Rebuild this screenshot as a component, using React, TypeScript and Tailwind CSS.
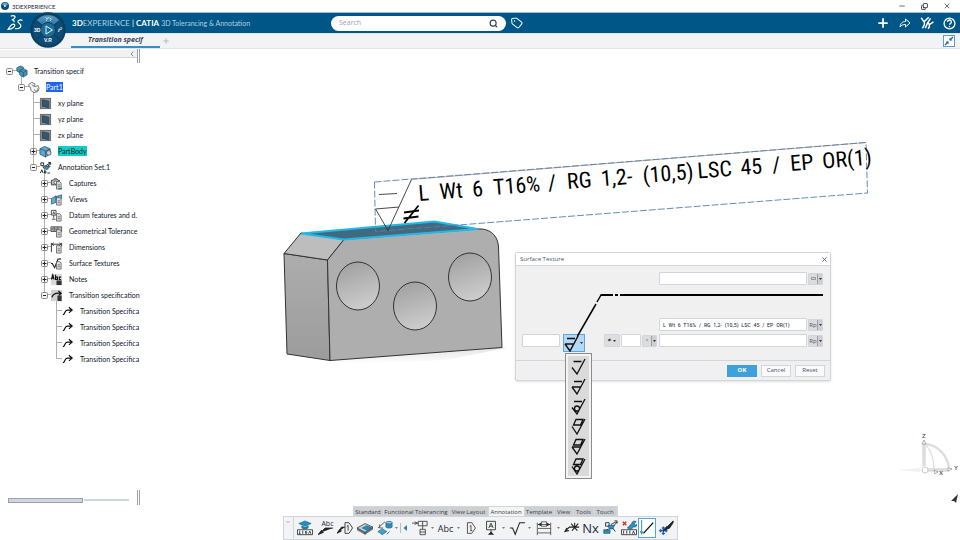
import React, { useState } from 'react';
import { Search, Tag, Plus, X, Minus, Copy, ChevronLeft, ChevronDown } from 'lucide-react';

type IconName =
  | 'product' | 'part' | 'plane' | 'body' | 'set' | 'captures' | 'views' | 'datum'
  | 'gtol' | 'dims' | 'texture' | 'notes' | 'transition' | 'arrow';

interface TreeItem {
  label: string;
  level: number;
  icon: IconName;
  state?: 'open' | 'closed';
  mark?: string;
}

const TREE: TreeItem[] = [
  { label: 'Transition specif', level: 0, icon: 'product', state: 'open' },
  { label: 'Part1', level: 1, icon: 'part', state: 'open', mark: 'bg-[#1b66f0] text-white' },
  { label: 'xy plane', level: 2, icon: 'plane' },
  { label: 'yz plane', level: 2, icon: 'plane' },
  { label: 'zx plane', level: 2, icon: 'plane' },
  { label: 'PartBody', level: 2, icon: 'body', state: 'closed', mark: 'bg-[#0fcfc4]' },
  { label: 'Annotation Set.1', level: 2, icon: 'set', state: 'open' },
  { label: 'Captures', level: 3, icon: 'captures', state: 'closed' },
  { label: 'Views', level: 3, icon: 'views', state: 'closed' },
  { label: 'Datum features and d.', level: 3, icon: 'datum', state: 'closed' },
  { label: 'Geometrical Tolerance', level: 3, icon: 'gtol', state: 'closed' },
  { label: 'Dimensions', level: 3, icon: 'dims', state: 'closed' },
  { label: 'Surface Textures', level: 3, icon: 'texture', state: 'closed' },
  { label: 'Notes', level: 3, icon: 'notes', state: 'closed' },
  { label: 'Transition specification', level: 3, icon: 'transition', state: 'open' },
  { label: 'Transition Specifica', level: 4, icon: 'arrow' },
  { label: 'Transition Specifica', level: 4, icon: 'arrow' },
  { label: 'Transition Specifica', level: 4, icon: 'arrow' },
  { label: 'Transition Specifica', level: 4, icon: 'arrow' },
];

const INDENT = ['pl-[3px]', 'pl-[15px]', 'pl-[27px]', 'pl-[38px]', 'pl-[49px]'];

const Page = () => (
  <g stroke="#555" strokeWidth="0.8" fill="#ddd">
    <path d="M7 5h3.5l1.5 1.5V13H7z" />
    <path d="M8.3 8.5h2.5M8.3 10.5h2.5" />
  </g>
);

const TreeIcon = ({ name }: { name: IconName }) => {
  const shapes: Record<IconName, React.ReactNode> = {
    product: (
      <g fill="#4b94b8" stroke="#1f5672" strokeWidth="0.8">
        <path d="M2 3l4-2 3 1.500v4L5.500 8.500 2 6.500z" />
        <path d="M5 6l4-2L13 6v4.500L9 13 5 10.500z" />
        <path d="M5 6l4 2L13 6M9 8v5" fill="none" />
      </g>
    ),
    part: (
      <g fill="#f3f3f3" stroke="#666" strokeWidth="0.9">
        <path d="M2 3.500l3-2 3.500 1.500L8 6l4-1 1 3-1.500 3.500-4 1L4 10V7L2 6z" />
        <path d="M5 4l3 2M8 9a2 1.500 0 1 0 3-1" fill="none" />
      </g>
    ),
    plane: (
      <g>
        <rect x="1.500" y="1.500" width="11" height="11" fill="#8a9499" stroke="#666" />
        <path d="M3.500 3l7 1.500v7L3.500 10z" fill="#315871" stroke="#26323a" strokeWidth="0.7" />
      </g>
    ),
    body: (
      <g strokeWidth="0.8">
        <path d="M1 4l5-2.500L12 4v5.500L7 13 1 10z" fill="#5fa6c8" stroke="#1f5672" />
        <path d="M1 4l6 2.500L12 4M7 6.500V13" fill="none" stroke="#1f5672" />
        <circle cx="10.500" cy="8.500" r="2.500" fill="#c9d3d8" stroke="#444" />
      </g>
    ),
    set: (
      <g fill="none" stroke="#222" strokeWidth="1">
        <path d="M2 2h3v3H2zM6 6l6-4M9 7l3-5M4 6l3 4M10 1.500h2.500V4" />
        <path d="M5 5.500h7l-3.500 4z" fill="#2d8fb8" stroke="#1f5672" />
        <path d="M1.500 13L3 9.500 4.500 13M6 10v3h1.500v-2H6M9 13h3" />
      </g>
    ),
    captures: (
      <g>
        <path d="M1.500 3.500h2l1-1.500h3l1 1.500H10v5H1.500z" fill="#bbb" stroke="#333" strokeWidth="0.9" />
        <circle cx="6" cy="6" r="1.600" fill="#fff" stroke="#333" strokeWidth="0.8" />
        <Page />
        <path d="M9 12.500h4" stroke="#287da5" strokeWidth="1.500" />
      </g>
    ),
    views: (
      <g>
        <path d="M1.500 6l5-3v7l-5 2zM6.500 4l6-2v4L6.500 7z" fill="#62aed0" stroke="#28566c" strokeWidth="0.8" />
        <Page />
      </g>
    ),
    datum: (
      <g fill="none" stroke="#333" strokeWidth="0.9">
        <path d="M1.500 1.500h5v5h-5zM3 5.500L4 3l1 2.500M4 6.500V10M2 11h4" />
        <Page />
      </g>
    ),
    gtol: (
      <g fill="#bbb" stroke="#444" strokeWidth="0.9">
        <path d="M1 2h11.500v5H1zM4.500 2v5M8.500 2v5M2 5.500l1.500-2M5.500 4.500H7.500" />
        <Page />
      </g>
    ),
    dims: (
      <g fill="none" stroke="#333" strokeWidth="1">
        <path d="M1.500 2v10M12.500 2v4M2 3.500h10M4 2L2 3.500 4 5M10 2l2 1.500L10 5" />
        <Page />
      </g>
    ),
    texture: (
      <g fill="none" stroke="#222" strokeWidth="1.200">
        <path d="M1 7h1.500L5 11.500 8.500 2.500 12 2" />
        <Page />
      </g>
    ),
    notes: (
      <g>
        <path d="M1 1h12v12H1z" fill="#dadada" />
        <path d="M1.500 7L3 2l1.500 5M2 5.500h2M6 2v5h2V4.500H6M12 4.500h-2V7h2" fill="none" stroke="#111" strokeWidth="1.200" />
        <path d="M7 8h5.500v5H7z" fill="#333" />
      </g>
    ),
    transition: (
      <g>
        <path d="M1 1h12v12H1z" fill="#d0d0d0" />
        <path d="M2 9c1-4 4-5 9-4.500M9 2l3 2.500L9.500 7" fill="none" stroke="#111" strokeWidth="1.300" />
        <path d="M8 7h4.500v6H8z" fill="#333" />
      </g>
    ),
    arrow: (
      <path
        d="M2 10.500C4.500 10.500 3.500 5.500 7 5.500h5M8.500 2.500l3.500 3-3.500 3"
        fill="none"
        stroke="#111"
        strokeWidth="1.300"
      />
    ),
  };
  return (
    <svg viewBox="0 0 14 14" className="h-[13px] w-[13px] shrink-0" aria-hidden="true">
      {shapes[name]}
    </svg>
  );
};

const TitleBar = () => (
  <div className="flex h-3 items-center bg-white pl-px font-['Lato',sans-serif] text-[6px] text-gray-800">
    <svg viewBox="0 0 16 16" className="mr-[3px] h-2 w-2" aria-hidden="true">
      <circle cx="8" cy="8" r="8" fill="#0d4f79" />
      <path d="M2 5a6.500 6.500 0 0 1 12 0L8 8z" fill="#5aa7cf" />
      <path d="M6.500 5.500L11 8l-4.500 2.500z" fill="#fff" />
    </svg>
    <span>3DEXPERIENCE</span>
    <div className="ml-auto flex items-center gap-[15px] pr-[9px]">
      <button aria-label="Minimize"><Minus className="h-2 w-2" /></button>
      <button aria-label="Restore"><Copy className="h-[7px] w-[7px] -scale-y-100" strokeWidth={3} /></button>
      <button aria-label="Close window"><X className="h-2 w-2" /></button>
    </div>
  </div>
);

const Compass = () => (
  <button aria-label="Compass" className="absolute top-3 left-[30px] z-10 h-9 w-9">
    <svg viewBox="0 0 36 36" className="h-full w-full">
      <defs>
        <linearGradient id="sector" x1="0" y1="0" x2="0" y2="1">
          <stop offset="0" stopColor="#5d9cc0" />
          <stop offset="1" stopColor="#2a75a0" />
        </linearGradient>
      </defs>
      <circle cx="18" cy="18" r="17.800" fill="#0b3f61" />
      <circle cx="18" cy="18" r="15.500" fill="#0d4c74" />
      <path d="M6.500 8.500a15 15 0 0 1 23 0L23.500 13.500a7.500 7.500 0 0 0-11 0z" fill="url(#sector)" />
      <path d="M6.500 27.500L12 22.500a7.500 7.500 0 0 0 12 0L29.500 27.500M6.500 8.500L12.500 13.500M29.500 8.500L23.500 13.500" fill="none" stroke="#093a5a" />
      <circle cx="18" cy="18" r="7.500" fill="#1d6c98" stroke="#0a4168" />
      <path d="M16 14l6.500 4-6.500 4z" fill="none" stroke="#fff" strokeWidth="0.900" />
      <path d="M15.500 5.500l2 1.500 1-2M19.500 6l2 1M16 9l1-1.500M20 9l1-1.500" stroke="#d8ebf5" strokeWidth="0.900" fill="none" />
      <g fill="#fff" fontFamily="Liberation Sans, sans-serif" fontWeight="700">
        <text x="4" y="20" fontSize="5">3D</text>
        <text x="14" y="30" fontSize="5">V.R</text>
        <text x="28" y="20" fontSize="6" fontStyle="italic">i²</text>
      </g>
    </svg>
  </button>
);

const Header = () => (
  <header className="flex h-[21px] items-center border-t border-[#9fc0d4] bg-[#005686] text-white">
    <div className="flex w-[331px] items-center">
      <svg viewBox="0 0 30 30" className="ml-[7px] h-4 w-4" fill="none" stroke="#fff" strokeWidth="2.200" aria-label="3DS" role="img">
        <path d="M7 2c5-1.500 9-.5 8 2.500-.8 2.500-4 4-6 4.500 4 0 5 2 4 4.500" />
        <path d="M2 27c4-7 7-10 10-10 3.500 0 3.500 3.500 0 6.500-2.500 2.300-6 3.500-10 3.500z" />
        <path d="M29 10c-4-1.500-8-.5-8.500 2-.6 3 6.500 4.500 5.500 9-.8 3.800-5 5.500-11 4.500" />
      </svg>
      <p className="ml-[49px] font-['Lato',sans-serif] text-[8px] whitespace-nowrap text-[#b5d0e0]">
        <b className="text-white">3D</b>EXPERIENCE <span className="text-white">|</span>{' '}
        <b className="text-white">CATIA</b>{' '}
        <span className="text-[7px]">3D Tolerancing &amp; Annotation</span>
      </p>
    </div>
    <div className="flex h-[15px] w-[175px] items-center rounded-full bg-white px-2 text-gray-700">
      <input aria-label="Search" placeholder="Search" className="min-w-0 flex-1 text-[7px] outline-none placeholder:text-gray-400" />
      <button aria-label="Run search"><Search className="h-[9px] w-[9px]" strokeWidth={3} /></button>
    </div>
    <div className="flex flex-1 items-center">
      <button aria-label="Tags" className="ml-[5px]"><Tag className="h-3 w-3 -rotate-6" /></button>
      <div className="ml-auto flex items-center gap-[9px] pr-1">
        <button aria-label="Add"><Plus className="h-[14px] w-[14px]" strokeWidth={3} /></button>
        <button aria-label="Share">
          <svg viewBox="0 0 24 24" className="h-3 w-3" fill="none" stroke="currentColor" strokeWidth="2">
            <path d="M2 20c1-8 5-11 11-11V4l9 8-9 8v-5c-5 0-8 1-11 5z" />
          </svg>
        </button>
        <button aria-label="Communities">
          <svg viewBox="0 0 24 24" className="h-[14px] w-[14px]" fill="none" stroke="currentColor" strokeWidth="2.500">
            <path d="M2 3l5 7 8-8M7 10c2 3 0 7-3 11M9 21c3-8 6-13 9-17M13 10l3 5 7-5M16 15c1 2 0 4-2 7" />
          </svg>
        </button>
        <button aria-label="Help">
          <svg viewBox="0 0 24 24" className="h-[13px] w-[13px]" fill="none" stroke="currentColor" strokeWidth="2.400">
            <circle cx="12" cy="12" r="10" />
            <path d="M8.500 9a3.500 3.500 0 1 1 5 3.200c-1 .5-1.500 1-1.500 2.300M12 16.500v2.500" />
          </svg>
        </button>
      </div>
    </div>
  </header>
);

const DocumentTabs = () => (
  <nav className="flex h-4 items-stretch border-t border-b border-[#e1e4e7] bg-[#f1f3f5] pl-[71px]">
    <a href="#doc" className="flex w-[89px] items-center justify-center border-b-2 border-[#368ec4] text-[7px] font-bold text-gray-700 italic">
      Transition specif
    </a>
    <button aria-label="New tab" className="ml-px flex items-center px-px text-gray-400"><Plus className="h-2 w-2" /></button>
    <button aria-label="Exit full view" className="mr-[5px] ml-auto flex items-center">
      <svg viewBox="0 0 12 12" className="h-3 w-3">
        <rect x="0.500" y="0.500" width="11" height="11" fill="#fff" stroke="#5f9ec4" />
        <path d="M6.500 2.500v3h3zM2.500 6.500h3v3z" fill="#1d6594" />
        <path d="M10 2L7 5M2 10l3-3" stroke="#1d6594" strokeWidth="1.200" />
      </svg>
    </button>
  </nav>
);

const Sidebar = () => (
  <aside className="flex w-[141px] shrink-0 flex-col">
    <div className="flex h-[14px] justify-between">
      <div className="mt-px flex h-2 flex-1 items-center justify-end border-b border-gray-300 bg-[#f1f1f1] pr-px">
        <button aria-label="Collapse tree"><ChevronLeft className="h-2 w-2 text-gray-600" /></button>
      </div>
      <div className="h-[14px] w-[3px] border-x border-gray-400" />
      <div className="w-px" />
    </div>
    <ul className="relative font-['Lato',sans-serif] text-[7px] text-gray-900">
      <svg className="absolute top-0 left-0 h-[304px] w-20" fill="none" stroke="#b0b0b0" aria-hidden="true">
        <path d="M9 7.500H18M21.500 12v11M21 23.500H30M33.500 28v76M33 39.500H40M33 55.500H40M33 71.500H40M33 87.500H40M33 103.500H40" />
        <path d="M44.500 108v124M44 119.500H51M44 135.500H51M44 151.500H51M44 167.500H51M44 183.500H51M44 199.500H51M44 215.500H51M44 231.500H51" />
        <path d="M56.500 236v60M56 247.500H62M56 263.500H62M56 279.500H62M56 295.500H62" />
      </svg>
      {TREE.map((item, index) => (
        <li key={index} className={`relative flex h-4 items-center ${INDENT[item.level]}`}>
          <span className="flex w-3 shrink-0 justify-center">
            {item.state && (
              <button aria-label={`Toggle ${item.label}`}>
                <svg viewBox="0 0 7 7" className="h-[7px] w-[7px]">
                  <rect x="0.500" y="0.500" width="6" height="6" rx="1" fill="#f4f4f4" stroke="#8b8b8b" />
                  <path d={item.state === 'open' ? 'M2 3.500h3' : 'M1.500 3.500h4M3.500 1.500v4'} stroke="#222" />
                </svg>
              </button>
            )}
          </span>
          <TreeIcon name={item.icon} />
          <span className={`ml-[6px] whitespace-nowrap ${item.mark ?? ''}`}>{item.label}</span>
        </li>
      ))}
    </ul>
    <div className="mt-auto mb-px flex h-[15px] items-end pl-2">
      <div className="mb-[2px] h-[5px] w-[75px] border border-gray-400 bg-gray-300" />
      <div className="mb-1 ml-px h-[2px] w-[45px] bg-gray-300" />
      <div className="mr-px ml-auto h-[15px] w-[3px] border-x border-gray-400" />
    </div>
  </aside>
);

const HOLES = [
  [358, 286],
  [415, 306],
  [470, 277],
];

// Words of the engraved note with their distance along the baseline.
const NOTE_WORDS: [string, number][] = [
  ['L', 0],
  ['Wt', 21],
  ['6', 54],
  ['T16%', 75],
  ['/', 130],
  ['RG', 149],
  ['1,2-', 183],
  ['(10,5)', 225],
  ['LSC', 280],
  ['45', 323],
  ['/', 355],
  ['EP', 373],
  ['OR(1)', 405],
];

const Model = () => (
  <svg viewBox="270 135 610 235" className="absolute top-[86px] left-[129px] h-[235px] w-[610px]">
    <defs>
      <linearGradient id="hole" x1="0" y1="0" x2="0.300" y2="1">
        <stop offset="0" stopColor="#9d9d9d" />
        <stop offset="1" stopColor="#cacaca" />
      </linearGradient>
      <linearGradient id="side" x1="0" y1="0" x2="0" y2="1">
        <stop offset="0" stopColor="#adadad" />
        <stop offset="1" stopColor="#9c9c9c" />
      </linearGradient>
      <linearGradient id="shadow" x1="0" y1="0" x2="0" y2="1">
        <stop offset="0" stopColor="#e4e4e4" />
        <stop offset="1" stopColor="#ffffff" />
      </linearGradient>
    </defs>
    <path d="M330 360L502 347l4 1-60 12-90 4z" fill="url(#shadow)" />
    <g stroke="#333" strokeWidth="1" strokeLinejoin="round">
      <path d="M284 253.500L327.500 260l2.500 100.500L287 354z" fill="url(#side)" />
      <path d="M284 253.500L301 233l43 6.500L327.500 260z" fill="#bdbdbd" />
      <path d="M327.500 260L344 239.500l134-10.500h4c10 1 16 8 16.500 18L502 347.500 330 360.500z" fill="#aeaeae" />
      {HOLES.map(([x, y]) => (
        <ellipse key={x} cx={x} cy={y} rx="21.500" ry="24" fill="url(#hole)" />
      ))}
    </g>
    <path d="M301 233.500L434.500 221.500 477.500 229 344 239.500z" fill="#426a7e" stroke="#1fb9ea" strokeWidth="1.800" />
    <path d="M374.500 182L866 142.500 867.500 193 375.500 231.500z" fill="none" stroke="#5580ad" strokeWidth="0.900" strokeDasharray="7 2" />
    <path d="M411.500 179.500L866 142.500" stroke="#777" strokeWidth="0.600" />
    <path d="M375.500 209L399 207M375.500 209L388 230.500 411.500 179.500M379 194.500L397 193.500" fill="none" stroke="#333" strokeWidth="0.900" />
    <path d="M404 212.500l15-2M403.500 218.500l15-2M404.500 223l14-17.500" stroke="#000" strokeWidth="1.800" />
    <text
      transform="translate(419 201) rotate(-4.600)"
      fontFamily="'Roboto Condensed', 'Liberation Sans Narrow', 'DejaVu Sans Condensed', sans-serif"
      fontSize="22"
    >
      {NOTE_WORDS.map(([word, x]) => (
        <tspan key={x} x={x}>{word}</tspan>
      ))}
    </text>
  </svg>
);

const SYMBOLS = [
  { label: 'Basic', d: 'M2.500 3.500h8M1 9.500l5 6.500L14 1' },
  { label: 'Material removal', d: 'M3 3.500h8M1 9h9M1 9l5 7L14 1' },
  { label: 'No removal', d: 'M3 3.500h8M1 9.500l5 6.500L14 1M8.500 10.500a2.500 2.500 0 1 1-5 0a2.500 2.500 0 1 1 5 0' },
  { label: 'Basic, all around', d: 'M5 1.500h7l-2.500 5.500H2.500zM1 8.500l5 7.500L14 1' },
  { label: 'Removal, all around', d: 'M5 1.500h7l-2.500 5.500H2.500zM1 9h9M1 9l5 7L14 1' },
  { label: 'No removal, all around', d: 'M5 1h7l-2.500 5.500H2.500zM1 8.500l5 7.500L14 1M8.500 10.500a2.500 2.500 0 1 1-5 0a2.500 2.500 0 1 1 5 0' },
];

const Caret = () => (
  <svg viewBox="0 0 6 4" className="h-[2px] w-[3px] shrink-0" aria-hidden="true"><path d="M0 0h6L3 4z" fill="#333" /></svg>
);

const SplitButton = ({ label, children }: { label: string; children: React.ReactNode }) => (
  <button
    aria-label={label}
    className="flex h-3 items-stretch rounded-[1px] border border-gray-300 bg-[#dcdcdc] text-[6px] leading-none text-gray-600"
  >
    <span className="flex w-2 items-center justify-center">{children}</span>
    <span className="flex w-[5px] items-center justify-center border-l border-gray-400 bg-[#cfcfcf]"><Caret /></span>
  </button>
);

const FIELD = 'h-[13px] rounded-[1px] border border-gray-300 bg-white px-[3px] text-[6px] text-gray-800 outline-none';

const SurfaceTextureDialog = () => {
  const [menuOpen, setMenuOpen] = useState(true);
  const [symbol, setSymbol] = useState(1);
  const [requirement, setRequirement] = useState('L  Wt  6  T16%  /  RG  1,2-  (10,5)  LSC  45  /  EP  OR(1)');

  const pick = (index: number) => {
    setSymbol(index);
    setMenuOpen(false);
  };

  return (
    <section role="dialog" aria-label="Surface Texture" className="absolute top-[203px] left-[374px] w-[316px] rounded-[2px] border border-gray-300 bg-[#f0f0f0] shadow-sm">
      <div className="flex h-[13px] items-center justify-between border-b border-gray-300 bg-white pr-[2px] pl-1 text-[6px] text-gray-600">
        <h2>Surface Texture</h2>
        <button aria-label="Close"><X className="h-[7px] w-[7px]" strokeWidth={3} /></button>
      </div>
      <div className="relative flex h-[94px] flex-col gap-[3px] pt-[6px] pr-[7px] pl-[6px]">
        <div className="mb-[30px] flex items-center justify-end gap-px">
          <input aria-label="Upper requirement" className={`${FIELD} w-[148px]`} />
          <SplitButton label="Insert symbol">
            <svg viewBox="0 0 6 4" className="h-[3px] w-[5px]" fill="none" stroke="#777" aria-hidden="true"><path d="M0.500 0.500h5v3h-5z" /></svg>
          </SplitButton>
        </div>
        <div className="flex items-center justify-end gap-px">
          <input
            aria-label="Requirement 1"
            value={requirement}
            onChange={(e) => setRequirement(e.target.value)}
            className={`${FIELD} w-[148px] font-['Roboto_Condensed','Liberation_Sans_Narrow',sans-serif]`}
          />
          <SplitButton label="Requirement 1 parameter">Rp</SplitButton>
        </div>
        <div className="flex items-start">
          <input aria-label="Machining allowance" className={`${FIELD} w-[38px]`} />
          <div className="relative ml-[3px]">
            <button
              aria-label="Texture symbol"
              aria-expanded={menuOpen}
              onClick={() => setMenuOpen(!menuOpen)}
              className="flex h-[18px] w-[22px] items-center gap-px border border-[#5aa5de] bg-[#b5d8f5]"
            >
              <svg viewBox="0 0 15 17" className="h-[17px] w-[15px] shrink-0" fill="none" stroke="#111" strokeWidth="1.500"><path d={SYMBOLS[symbol].d} /></svg>
              <Caret />
            </button>
            {menuOpen && (
              <ul className="absolute top-5 left-[3px] z-10 w-[25px] border-2 border-[#f3f3f3] bg-[#dadada] shadow-[0_0_0_1px_#8c8c8c]">
                {SYMBOLS.map((s, i) => (
                  <li key={s.label}>
                    <button aria-label={s.label} onClick={() => pick(i)} className="flex h-5 w-full items-center justify-center">
                      <svg viewBox="0 0 15 17" className="h-[17px] w-[15px]" fill="none" stroke="#111" strokeWidth="1.300"><path d={s.d} /></svg>
                    </button>
                  </li>
                ))}
              </ul>
            )}
          </div>
          <div className="ml-auto flex items-center gap-px">
            <button aria-label="Lay direction" className="flex h-[13px] w-4 items-center justify-center gap-[2px] rounded-[1px] border border-gray-300 bg-[#dedede] text-[6px]">
              ≠<Caret />
            </button>
            <input aria-label="Angle" className={`${FIELD} w-5`} />
            <SplitButton label="Angle unit">°</SplitButton>
            <input aria-label="Requirement 2" className={`${FIELD} ml-px w-[148px]`} />
            <SplitButton label="Requirement 2 parameter">Rp</SplitButton>
          </div>
        </div>
        <svg viewBox="0 0 314 94" className="pointer-events-none absolute inset-0 z-20 h-[94px] w-[314px]" fill="none" stroke="#000" aria-hidden="true">
          <path d="M61.500 70L80 38M81 36L85 29" strokeWidth="1.500" />
          <path d="M84.500 29h12.500M99 29h3M104 29H307" strokeWidth="2" />
        </svg>
      </div>
      <div className="flex h-5 items-center justify-end gap-1 border-t border-gray-300 pr-[5px] text-[6px] text-gray-600">
        <button className="h-3 w-[30px] bg-[#3fa0dc] font-bold text-white">OK</button>
        <button className="h-3 w-[30px] border border-gray-300 bg-gray-50">Cancel</button>
        <button className="h-3 w-[30px] border border-gray-300 bg-gray-50">Reset</button>
      </div>
    </section>
  );
};

const AxisTriad = () => (
  <svg viewBox="0 0 64 76" className="absolute right-0 bottom-0 h-[76px] w-16" aria-hidden="true">
    <path d="M2 40L24 38v4z" fill="#f0f0f0" />
    <path d="M28 14C42 14 51 26 53 37" fill="none" stroke="#dfdfdf" strokeWidth="2.500" />
    <path d="M28 14c7 5 10 16 10 27" fill="none" stroke="#e2e2e2" strokeWidth="1.500" />
    <path d="M28 36V14M31 40h22" fill="none" stroke="#dcdcdc" strokeWidth="3.500" />
    <circle cx="29" cy="40" r="3" fill="#fff" stroke="#ccc" />
    <path d="M26 14l2-4 2 4zM52 37.500l4 1.500-4 2zM38 40l4 2-3 2z" fill="#fff" stroke="#999" strokeWidth="0.800" />
    <g fill="#666" fontFamily="Liberation Sans, sans-serif" fontSize="6" fontWeight="700">
      <text x="26" y="8">Z</text>
      <text x="58" y="40">Y</text>
      <text x="43" y="45">X</text>
    </g>
    <path d="M55 71l7-7-2 9-2-2z" fill="#333" />
  </svg>
);

const RIBBON_TABS = [
  { label: 'Standard', width: 'w-[30px]' },
  { label: 'Functional Tolerancing', width: 'w-[66px]' },
  { label: 'View Layout', width: 'w-[39px]' },
  { label: 'Annotation', width: 'w-[36px]' },
  { label: 'Template', width: 'w-[30px]' },
  { label: 'View', width: 'w-[19px]' },
  { label: 'Tools', width: 'w-[21px]' },
  { label: 'Touch', width: 'w-[22px]' },
];

interface Tool {
  label: string;
  width: string;
  art?: React.ReactNode;
  text?: string;
  size?: string;
  caret?: boolean;
  active?: boolean;
}

// Each drawing uses an 18x18 box.
const TOOLS: Tool[] = [
  {
    label: 'Tolerancing advisor', width: 'w-[22px]',
    art: (
      <>
        <path d="M9 1l7 3-7 3-7-3z" fill="#1f8fc0" stroke="#155a7d" strokeWidth="0.600" />
        <path d="M5 6v3c2 2 6 2 8 0V6L9 8z" fill="#1f7dab" />
        <path d="M0.500 11h17v5.500h-17z" fill="#fff" stroke="#333" />
        <path d="M3 12v3.500M2 15.500h2M6.500 12v3.500M9.500 13h1.500v2H9.500zM13 15.500l1.500-3 1.200 3" stroke="#222" fill="none" strokeWidth="0.900" />
      </>
    ),
  },
  {
    label: 'Text with leader', width: 'w-[20px]', text: 'Abc', size: 'text-[7px]',
    art: <path d="M17 9H8L3 14M4 11.500l-4 5 6-2.500z" fill="#222" stroke="#222" strokeWidth="0.900" />,
  },
  {
    label: 'Flag note with leader', width: 'w-[18px]',
    art: (
      <>
        <path d="M9 3h4.500l4 6-4 6H9zM12.500 6v6M11 7.500L12.500 6" fill="none" stroke="#333" />
        <path d="M9 8H5l-3 5M3 10.500L0 15l5-2.500z" fill="#222" stroke="#222" strokeWidth="0.900" />
      </>
    ),
  },
  {
    label: 'View', width: 'w-[22px]',
    art: (
      <>
        <path d="M0 9l9-5 9 4-9 6z" fill="#c3ccd0" stroke="#333" strokeWidth="0.800" />
        <path d="M6 9l5-2.500 5 2-5 3z" fill="#168fc4" stroke="#175b7a" strokeWidth="0.600" />
        <path d="M0 9v2l9 5v-2zM18 8v2l-9 6v-2z" fill="#6d8794" stroke="#333" strokeWidth="0.600" />
      </>
    ),
  },
  {
    label: 'View from reference', width: 'w-[18px]', caret: true,
    art: (
      <>
        <path d="M10 3v5c1.500 1.500 5.500 1.500 7 0V3z" fill="#2a8fbd" stroke="#1a5876" strokeWidth="0.700" />
        <ellipse cx="13.500" cy="3" rx="3.500" ry="1.500" fill="#8cc9e4" stroke="#1a5876" strokeWidth="0.700" />
        <path d="M1 13l5-3 5 3-5 3.500z" fill="#3fa3d0" stroke="#175b7a" strokeWidth="0.700" />
        <path d="M1 9l8-7M11 16l3-3M3 5v4h4" stroke="#555" fill="none" />
      </>
    ),
  },
  { label: 'Back', width: 'w-[10px]', art: <path d="M0 1v16" stroke="#aaa" /> },
  {
    label: 'Geometrical tolerance', width: 'w-[20px]', caret: true,
    art: <path d="M0 3.500h7M3 2l3 1.500L3 5M7 1.500h10v5H7zM12 1.500v5M12 6.500v4M9 10.500h6v6H9zM9 13.500h6" fill="none" stroke="#444" />,
  },
  { label: 'Text', width: 'w-[20px]', text: 'Abc', size: 'text-[9px]', caret: true },
  { label: 'Flag note', width: 'w-[19px]', art: <path d="M5 3h5l4 6-4 6H5zM9 6v6M7.500 7.500L9 6M8 12h2.500" fill="none" stroke="#444" /> },
  {
    label: 'Datum feature', width: 'w-[20px]', caret: true,
    art: (
      <>
        <path d="M4 1.500h10v9.500H4zM6.500 9L9 3.500 11.500 9M7.500 7h3M9 11v3" fill="none" stroke="#333" />
        <path d="M5.500 16.500l3.500-3.500 3.500 3.500z" fill="#222" />
      </>
    ),
  },
  { label: 'Surface texture', width: 'w-[20px]', caret: true, art: <path d="M1 9h3l3 7 5-13h6" fill="none" stroke="#222" strokeWidth="1.200" /> },
  {
    label: 'Framed dimension', width: 'w-[23px]', caret: true,
    art: (
      <>
        <path d="M1.500 8v9M16.500 8v9M2 9.500h15M2 14.500h15M1.500 8V3M16.500 8V3M2 5h14M6 2h6v5H6z" fill="none" stroke="#555" />
        <path d="M2 5l4-2v4zM16 5l-4-2v4z" fill="#222" />
      </>
    ),
  },
  {
    label: 'Weld symbol', width: 'w-[20px]',
    art: <path d="M2 12l4-4h11M1 13l4-1-2-2.500zM8 4l7 8M16 4L9 12M12 3v5" fill="none" stroke="#222" strokeWidth="1.200" />,
  },
  { label: 'Nx', width: 'w-[18px]', text: 'Nx', size: 'text-[13px]' },
  {
    label: 'Convert annotation', width: 'w-[20px]',
    art: (
      <>
        <path d="M4 3h4v4H4zM10 5l6-3M14 1h3v3M13 7l4-5" fill="none" stroke="#333" />
        <path d="M7 6h7l-2 4H8zM2 11h7v4H2z" fill="#2c93bf" stroke="#1b5773" strokeWidth="0.800" />
        <path d="M12 9l3 4M7 10l-2 2" stroke="#222" />
      </>
    ),
  },
  {
    label: 'Repair tolerance', width: 'w-[18px]',
    art: (
      <>
        <path d="M2 2l4 4M6 2L2 6" stroke="#dd2e1f" strokeWidth="1.500" />
        <path d="M7 9l5-5a3 3 0 0 1 5-2l-2 2 1 2 2-1c0 3-3 3-4 3l-3 3z" fill="#2c93bf" stroke="#1b5773" strokeWidth="0.700" />
        <path d="M0.500 11h17v5.500h-17z" fill="#fff" stroke="#333" />
        <path d="M3 12v3.500M6.500 12v3.500M10 12v3.500M13 15.500l1-3 1.500 3" stroke="#222" fill="none" />
      </>
    ),
  },
  {
    label: 'Leader line', width: 'w-[18px]', active: true,
    art: (
      <>
        <path d="M3 0v15M1.500 12.500L3 16l1.500-3.500" fill="none" stroke="#1f82b5" />
        <path d="M5 15L16 3" stroke="#111" strokeWidth="1.500" />
      </>
    ),
  },
  {
    label: 'Move annotation', width: 'w-[20px]',
    art: (
      <>
        <path d="M6 8v8M2 12h8M4.500 9.500L6 8l1.500 1.500M4.500 14.500L6 16l1.500-1.500M3.500 10.500L2 12l1.500 1.500M8.500 10.500L10 12l-1.500 1.500" fill="none" stroke="#1c62b5" strokeWidth="1.500" />
        <path d="M6 12l4-5 3 2zM11 7l6-6v2l-4 6z" fill="#222" stroke="#222" />
      </>
    ),
  },
];

const ToolButton = ({ tool }: { tool: Tool }) => (
  <>
    <button
      aria-label={tool.label}
      className={`relative flex h-5 shrink-0 items-center justify-center text-gray-800 ${tool.width} ${
        tool.active ? 'border border-[#58a6d6] bg-white' : ''
      }`}
    >
      {tool.label === 'Back' ? (
        <svg viewBox="0 0 9 18" className="h-[18px] w-[9px]">
          <path d="M0.500 4v10" stroke="#bbb" />
          <path d="M7 6v6L3.500 9z" fill="#1f82c4" />
        </svg>
      ) : (
        tool.art && <svg viewBox="0 0 18 18" className="h-4 w-4">{tool.art}</svg>
      )}
      {tool.text && (
        <span className={`${tool.size} leading-none ${tool.art ? 'absolute top-[2px] right-[2px]' : ''}`}>{tool.text}</span>
      )}
    </button>
    {tool.caret && (
      <button aria-label={`${tool.label} options`} className="flex w-[6px] shrink-0 justify-center opacity-60"><Caret /></button>
    )}
  </>
);

const ActionBar = () => {
  const [active, setActive] = useState('Annotation');
  return (
    <footer className="flex justify-center">
      <div>
        <div role="tablist" className="ml-[70px] flex h-[10px] w-fit border border-b-0 border-gray-300 bg-[#cdcfd0] text-[6px] text-gray-700">
          {RIBBON_TABS.map((tab) => (
            <button
              key={tab.label}
              role="tab"
              aria-selected={tab.label === active}
              onClick={() => setActive(tab.label)}
              className={`flex items-center justify-center border-r border-gray-300 leading-none whitespace-nowrap ${tab.width} ${
                tab.label === active ? 'bg-[#f4f4f4]' : ''
              }`}
            >
              {tab.label}
            </button>
          ))}
        </div>
        <div className="flex h-6 items-center border border-gray-300 bg-[#f2f3f4] pr-px">
          <button aria-label="Collapse action bar" className="flex h-full w-[10px] items-start justify-center border-r border-gray-300 pt-[2px]">
            <ChevronDown className="h-[6px] w-[6px] text-gray-500" />
          </button>
          {TOOLS.map((tool) => <ToolButton key={tool.label} tool={tool} />)}
        </div>
      </div>
    </footer>
  );
};

export default function App() {
  return (
    <div className="relative flex h-screen flex-col overflow-hidden bg-white font-['Open_Sans','Noto_Sans',sans-serif]">
      <TitleBar />
      <Header />
      <Compass />
      <DocumentTabs />
      <div className="flex min-h-0 flex-1">
        <Sidebar />
        <main className="relative min-w-0 flex-1">
          <Model />
          <SurfaceTextureDialog />
          <AxisTriad />
        </main>
      </div>
      <ActionBar />
    </div>
  );
}
